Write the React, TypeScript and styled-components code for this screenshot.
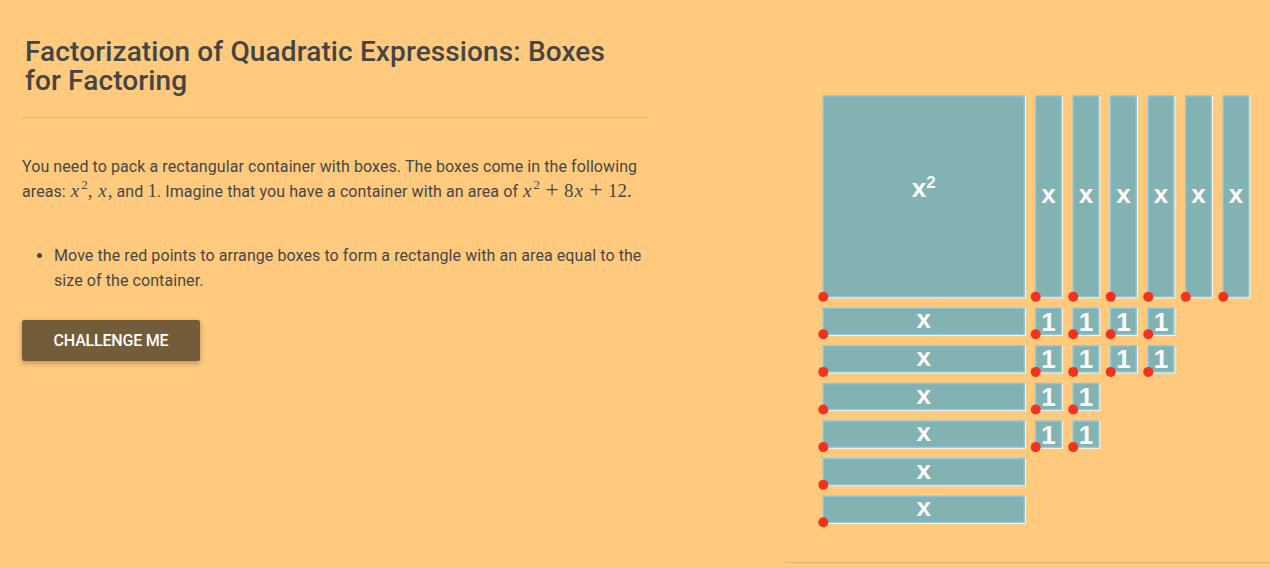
import React from "react";
import styled, { createGlobalStyle } from "styled-components";

const Global = createGlobalStyle`
  html, body { margin: 0; padding: 0; background: #ffca7d; }
  body { font-family: Roboto, "Liberation Sans", sans-serif; overflow: hidden; }
`;

const Page = styled.div`
  display: flex;
  justify-content: space-between;
  align-items: flex-start;
  width: 1270px;
  height: 568px;
  background: #ffca7d;
`;

const Left = styled.section`
  width: 624px;
  margin-left: 22px;
  padding-top: 37px;
  display: flex;
  flex-direction: column;
  align-items: flex-start;
`;

const Title = styled.h1`
  margin: 0;
  padding-left: 3px;
  max-width: 600px;
  font-size: 28px;
  line-height: 29px;
  font-weight: 500;
  letter-spacing: 0.12px;
  color: #454545;
`;

const Divider = styled.hr`
  align-self: stretch;
  border: none;
  border-top: 1px solid #e0b676;
  margin: 22px 0 0;
`;

const Para = styled.p`
  margin: 36px 0 0;
  font-size: 16px;
  line-height: 25px;
  letter-spacing: 0.08px;
  color: #474747;
`;

const Math = styled.span`
  font-family: "Liberation Serif", "DejaVu Serif", serif;
  font-size: 19px;
  line-height: 0;
  letter-spacing: 0;
  white-space: nowrap;
  sup { font-size: 13px; line-height: 0; vertical-align: 8px; margin-left: 1px; }
`;

const V = styled.i`
  font-style: italic;
  padding: 0 1px;
`;

const Op = styled.span`
  font-size: 23px;
  line-height: 0;
  margin: 0 5.5px;
`;

const List = styled.ul`
  margin: 39px 0 0;
  padding-left: 32px;
  font-size: 16px;
  line-height: 25px;
  letter-spacing: 0.08px;
  color: #474747;
`;

const Button = styled.button`
  margin-top: 27px;
  width: 178px;
  height: 41px;
  border: none;
  border-radius: 2px;
  background: #735c3a;
  color: #ffffff;
  font-family: Roboto, "Liberation Sans", sans-serif;
  font-size: 16px;
  font-weight: 500;
  letter-spacing: -0.2px;
  text-transform: uppercase;
  box-shadow: 0 2px 5px rgba(0, 0, 0, 0.22), 0 2px 8px rgba(0, 0, 0, 0.08);
  cursor: pointer;
`;

const Board = styled.div`
  width: 484px;
  height: 500px;
  margin-top: 62px;
  border-bottom: 1px solid #dcb276;
`;

const Shadow = styled.rect`
  fill: none;
  stroke: #ffffff;
  stroke-width: 1.5;
`;

const Box = styled.rect`
  fill: #82b2b1;
  stroke: #86c6e2;
  stroke-width: 1.5;
`;

const Label = styled.text`
  fill: #ffffff;
  font-family: "Liberation Sans", Arial, sans-serif;
  font-weight: 700;
  font-size: 26px;
`;

const Dot = styled.circle`
  fill: #f5321f;
`;

type Shape = { x: number; y: number; w: number; h: number; label: "x" | "1" | "x2" };

const COL0 = 249.7;
const COLSTEP = 37.52;
const ROW0 = 246.3;
const ROWSTEP = 37.6;

const shapes: Shape[] = [];
shapes.push({ x: 37.3, y: 34, w: 201, h: 200.7, label: "x2" });
for (let i = 0; i < 6; i++) shapes.push({ x: COL0 + i * COLSTEP, y: 34, w: 25.5, h: 200.7, label: "x" });
for (let i = 0; i < 6; i++) shapes.push({ x: 37.3, y: ROW0 + i * ROWSTEP, w: 201, h: 26, label: "x" });
const unitCounts = [4, 4, 2, 2];
unitCounts.forEach((n, r) => {
  for (let c = 0; c < n; c++) shapes.push({ x: COL0 + c * COLSTEP, y: ROW0 + r * ROWSTEP, w: 25.5, h: 26, label: "1" });
});

function ShapeLabel({ s }: { s: Shape }) {
  const cx = s.x + s.w / 2;
  const cy = s.y + s.h / 2;
  if (s.label === "x2") {
    return (
      <Label x={cx} y={cy + 0.5} textAnchor="middle">
        x<tspan dy={-9} fontSize={17}>2</tspan>
      </Label>
    );
  }
  return (
    <Label x={cx} y={cy + (s.label === "1" ? 9.5 : 7)} textAnchor="middle">
      {s.label}
    </Label>
  );
}

export default function App() {
  return (
    <>
      <Global />
      <Page>
        <Left>
          <Title>Factorization of Quadratic Expressions: Boxes for Factoring</Title>
          <Divider />
          <Para>
            You need to pack a rectangular container with boxes. The boxes come in the following areas:{" "}
            <Math>
              <V>x</V>
              <sup>2</sup>, <V>x</V>,
            </Math>{" "}
            and <Math>1</Math>. Imagine that you have a container with an area of{" "}
            <Math>
              <V>x</V>
              <sup>2</sup>
              <Op>+</Op>8<V>x</V>
              <Op>+</Op>12.
            </Math>
          </Para>
          <List>
            <li>Move the red points to arrange boxes to form a rectangle with an area equal to the size of the container.</li>
          </List>
          <Button>Challenge me</Button>
        </Left>
        <Board>
          <svg width="484" height="500" viewBox="0 0 484 500">
            {shapes.map((s, i) => (
              <g key={i}>
                <Shadow x={s.x + 0.8} y={s.y + 0.8} width={s.w} height={s.h} />
                <Box x={s.x} y={s.y} width={s.w} height={s.h} />
                <ShapeLabel s={s} />
              </g>
            ))}
            {shapes.map((s, i) => (
              <Dot key={"d" + i} cx={s.x} cy={s.y + s.h} r={5} />
            ))}
          </svg>
        </Board>
      </Page>
    </>
  );
}
